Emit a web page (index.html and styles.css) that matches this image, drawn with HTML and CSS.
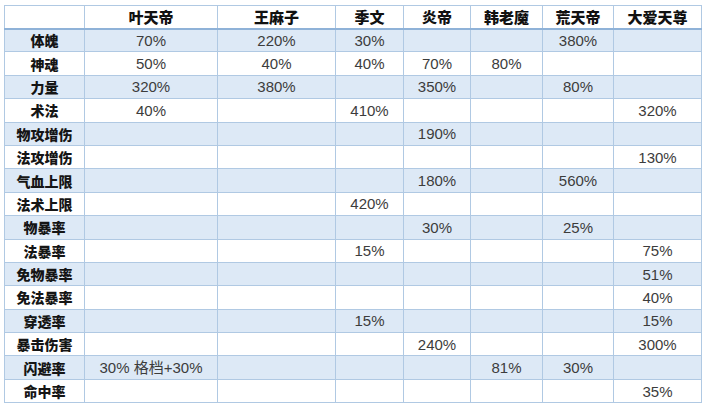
FILE: index.html
```html
<!DOCTYPE html>
<html lang="zh">
<head>
<meta charset="utf-8">
<link rel="stylesheet" href="styles.css">
</head>
<body>
<table class="stats">
  <colgroup>
    <col class="c-label">
    <col class="c-ye">
    <col class="c-wang">
    <col class="c-ji">
    <col class="c-yan">
    <col class="c-han">
    <col class="c-huang">
    <col class="c-da">
  </colgroup>
  <thead>
    <tr class="head">
      <th></th><th>叶天帝</th><th>王麻子</th><th>季文</th><th>炎帝</th><th>韩老魔</th><th>荒天帝</th><th>大爱天尊</th>
    </tr>
  </thead>
  <tbody>
    <tr class="alt"><th>体魄</th><td>70%</td><td>220%</td><td>30%</td><td></td><td></td><td>380%</td><td></td></tr>
    <tr><th>神魂</th><td>50%</td><td>40%</td><td>40%</td><td>70%</td><td>80%</td><td></td><td></td></tr>
    <tr class="alt"><th>力量</th><td>320%</td><td>380%</td><td></td><td>350%</td><td></td><td>80%</td><td></td></tr>
    <tr><th>术法</th><td>40%</td><td></td><td>410%</td><td></td><td></td><td></td><td>320%</td></tr>
    <tr class="alt"><th>物攻增伤</th><td></td><td></td><td></td><td>190%</td><td></td><td></td><td></td></tr>
    <tr><th>法攻增伤</th><td></td><td></td><td></td><td></td><td></td><td></td><td>130%</td></tr>
    <tr class="alt"><th>气血上限</th><td></td><td></td><td></td><td>180%</td><td></td><td>560%</td><td></td></tr>
    <tr><th>法术上限</th><td></td><td></td><td>420%</td><td></td><td></td><td></td><td></td></tr>
    <tr class="alt"><th>物暴率</th><td></td><td></td><td></td><td>30%</td><td></td><td>25%</td><td></td></tr>
    <tr><th>法暴率</th><td></td><td></td><td>15%</td><td></td><td></td><td></td><td>75%</td></tr>
    <tr class="alt"><th>免物暴率</th><td></td><td></td><td></td><td></td><td></td><td></td><td>51%</td></tr>
    <tr><th>免法暴率</th><td></td><td></td><td></td><td></td><td></td><td></td><td>40%</td></tr>
    <tr class="alt"><th>穿透率</th><td></td><td></td><td>15%</td><td></td><td></td><td></td><td>15%</td></tr>
    <tr><th>暴击伤害</th><td></td><td></td><td></td><td>240%</td><td></td><td></td><td>300%</td></tr>
    <tr class="alt"><th>闪避率</th><td>30% 格档+30%</td><td></td><td></td><td></td><td>81%</td><td>30%</td><td></td></tr>
    <tr><th>命中率</th><td></td><td></td><td></td><td></td><td></td><td></td><td>35%</td></tr>
  </tbody>
</table>
</body>
</html>
```

FILE: styles.css
```css
html, body {
  margin: 0;
  padding: 0;
  background: #ffffff;
}

body {
  padding: 5px 0 0 4px;
  font-family: "Liberation Sans", "Noto Sans CJK SC", sans-serif;
}

.stats {
  border-collapse: collapse;
  table-layout: fixed;
  width: 697px;
  border: 1px solid #b0c9e3;
}

.c-label { width: 80px; }
.c-ye { width: 133px; }
.c-wang { width: 118px; }
.c-ji { width: 68px; }
.c-yan { width: 67px; }
.c-han { width: 72px; }
.c-huang { width: 71px; }
.c-da { width: 88px; }

.stats th,
.stats td {
  border: 1px solid #b0c9e3;
  padding: 0;
  text-align: center;
  vertical-align: middle;
  white-space: nowrap;
  overflow: hidden;
}

.head {
  height: 23px;
}

.head th {
  font-family: "Noto Sans CJK SC", sans-serif;
  font-weight: 900;
  font-size: 15px;
  color: #111111;
  border-bottom: 2px solid #8fb2d8;
  line-height: 1;
}

tbody tr {
  height: 23.4px;
}

tbody th {
  font-family: "Noto Sans CJK SC", sans-serif;
  font-weight: 900;
  font-size: 14px;
  color: #151515;
  line-height: 1;
}

tbody td {
  font-size: 15px;
  color: #3c3c3c;
  line-height: 1;
}

tbody tr.alt th,
tbody tr.alt td {
  background: #dde9f6;
}
```
